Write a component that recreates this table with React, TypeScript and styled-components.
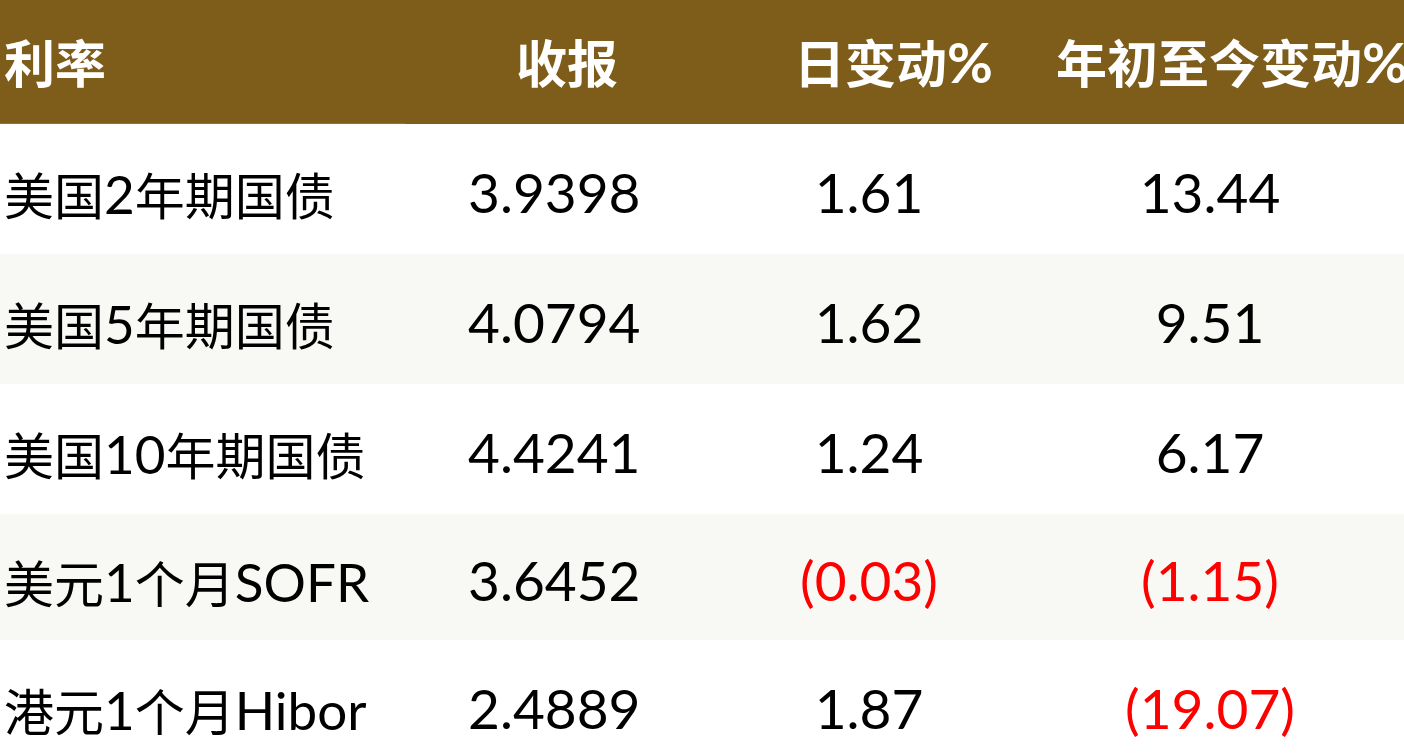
import React from 'react'
import styled, { createGlobalStyle } from 'styled-components'

const LATIN = '"Lato", "Liberation Sans", "Noto Sans CJK SC", sans-serif';
const CJK = '"Noto Sans CJK SC", "Noto Sans", sans-serif';

const GlobalStyle = createGlobalStyle`
  html, body {
    margin: 0;
    padding: 0;
    background: #ffffff;
    overflow: hidden;
  }
`;

const Table = styled.div`
  width: 1440px;
  display: flex;
  flex-direction: column;
`;

const HeaderRow = styled.div`
  display: grid;
  grid-template-columns: 405px 325px 278px 1fr;
  height: 124px;
  background: #7e5d1a;
`;

const HeadCell = styled.div<{ $indent: number; $underline?: boolean }>`
  display: flex;
  align-items: center;
  padding-left: ${p => p.$indent}px;
  padding-bottom: 2px;
  white-space: nowrap;
  font-family: ${CJK};
  font-weight: 700;
  font-size: 51px;
  color: #ffffff;
  box-shadow: ${p => (p.$underline ? 'inset 0 -1px 0 #a8682e' : 'none')};
`;

const Pct = styled.span`
  font-family: ${LATIN};
  font-weight: 700;
  font-size: 56px;
`;

const BodyRow = styled.div<{ $shaded: boolean; $height: number }>`
  display: grid;
  grid-template-columns: 405px 325px 278px 432px;
  height: ${p => p.$height}px;
  background: ${p => (p.$shaded ? '#f8f8f4' : '#ffffff')};
`;

const NameCell = styled.div`
  display: flex;
  align-items: center;
  padding-left: 4px;
  padding-top: 8px;
  white-space: nowrap;
  font-family: ${CJK};
  font-size: 50px;
  color: #000000;
`;

const Latin = styled.span`
  font-family: ${LATIN};
  font-size: 53px;
`;

const NumCell = styled.div<{ $indent?: number; $center?: boolean; $neg?: boolean; $shift?: number }>`
  display: flex;
  align-items: center;
  justify-content: ${p => (p.$center ? 'center' : 'flex-start')};
  padding-left: ${p => p.$indent ?? 0}px;
  padding-right: ${p => p.$shift ?? 0}px;
  padding-top: 6px;
  font-family: ${LATIN};
  font-size: 55px;
  color: ${p => (p.$neg ? '#ff0000' : '#000000')};
`;

type Row = {
  name: React.ReactNode;
  close: string;
  day: string;
  ytd: string;
};

const rows: Row[] = [
  { name: <>美国<Latin>2</Latin>年期国债</>, close: '3.9398', day: '1.61', ytd: '13.44' },
  { name: <>美国<Latin>5</Latin>年期国债</>, close: '4.0794', day: '1.62', ytd: '9.51' },
  { name: <>美国<Latin>10</Latin>年期国债</>, close: '4.4241', day: '1.24', ytd: '6.17' },
  { name: <>美元<Latin>1</Latin>个月<Latin>SOFR</Latin></>, close: '3.6452', day: '(0.03)', ytd: '(1.15)' },
  { name: <>港元<Latin>1</Latin>个月<Latin>Hibor</Latin></>, close: '2.4889', day: '1.87', ytd: '(19.07)' },
];

export default function App() {
  return (
    <>
      <GlobalStyle />
      <Table>
        <HeaderRow>
          <HeadCell $indent={4} $underline>利率</HeadCell>
          <HeadCell $indent={111}>收报</HeadCell>
          <HeadCell $indent={64}>日变动<Pct>%</Pct></HeadCell>
          <HeadCell $indent={48}>年初至今变动<Pct>%</Pct></HeadCell>
        </HeaderRow>
        {rows.map((r, i) => (
          <BodyRow key={i} $shaded={i % 2 === 1} $height={i === 3 ? 126 : 130}>
            <NameCell>{r.name}</NameCell>
            <NumCell $indent={63}>{r.close}</NumCell>
            <NumCell $center $neg={r.day.startsWith('(')}>{r.day}</NumCell>
            <NumCell $center $shift={28} $neg={r.ytd.startsWith('(')}>{r.ytd}</NumCell>
          </BodyRow>
        ))}
      </Table>
    </>
  )
}
